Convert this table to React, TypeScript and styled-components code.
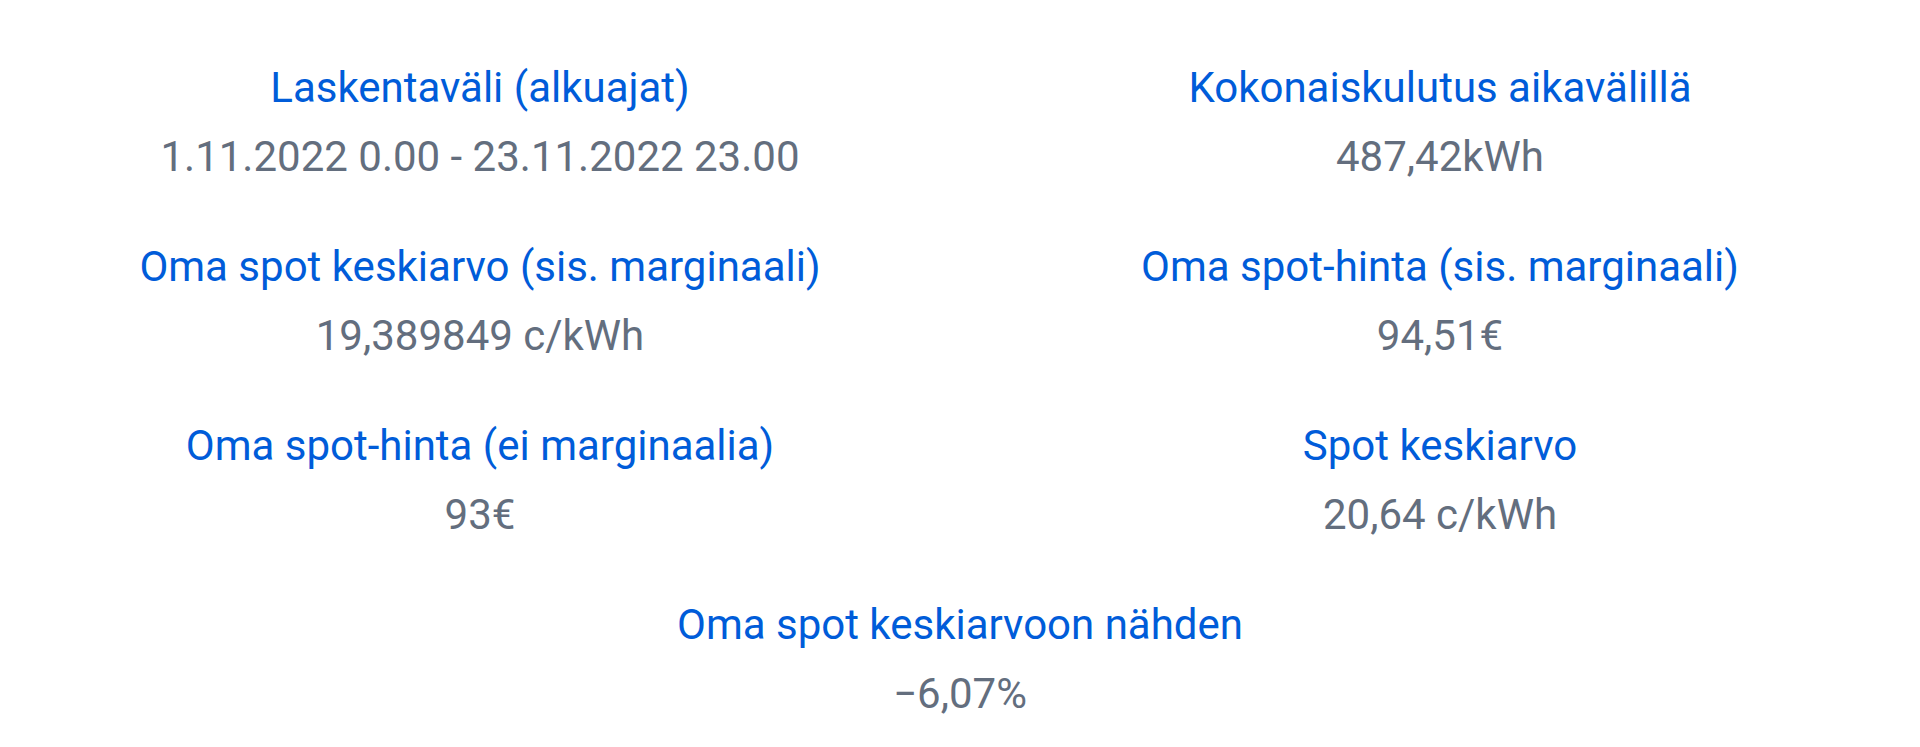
import styled, { createGlobalStyle } from "styled-components"

const GlobalStyle = createGlobalStyle`
    body {
        margin: 0;
        background: #ffffff;
        font-family: Roboto, "Noto Sans", Arial, sans-serif;
    }
`

type Stat = { label: string, value: string, wide?: boolean }

const stats: Stat[] = [
    { label: "Laskentaväli (alkuajat)", value: "1.11.2022 0.00 - 23.11.2022 23.00" },
    { label: "Kokonaiskulutus aikavälillä", value: "487,42kWh" },
    { label: "Oma spot keskiarvo (sis. marginaali)", value: "19,389849 c/kWh" },
    { label: "Oma spot-hinta (sis. marginaali)", value: "94,51€" },
    { label: "Oma spot-hinta (ei marginaalia)", value: "93€" },
    { label: "Spot keskiarvo", value: "20,64 c/kWh" },
    { label: "Oma spot keskiarvoon nähden", value: "\u22126,07%", wide: true },
]

export default function App() {
    return (
        <>
            <GlobalStyle />
            <StatsGrid>
                {stats.map(s => (
                    <StatItem key={s.label} wide={s.wide}>
                        <StatLabel>{s.label}</StatLabel>
                        <StatValue>{s.value}</StatValue>
                    </StatItem>
                ))}
            </StatsGrid>
        </>
    )
}

const StatsGrid = styled.div`
    display: grid;
    grid-template-columns: 1fr 1fr;
    row-gap: 54.7px;
    padding: 60.4px 0 0;
    width: 1920px;
`

const StatItem = styled.div<{ wide?: boolean }>`
    display: flex;
    flex-direction: column;
    align-items: center;
    gap: 12.3px;
    text-align: center;
    grid-column: ${props => props.wide ? "1 / span 2" : "auto"};
`

const StatLabel = styled.div`
    font-size: 42px;
    line-height: 56px;
    color: #005cd9;
`

const StatValue = styled.div`
    font-size: 42px;
    line-height: 56px;
    color: #636e7e;
`
